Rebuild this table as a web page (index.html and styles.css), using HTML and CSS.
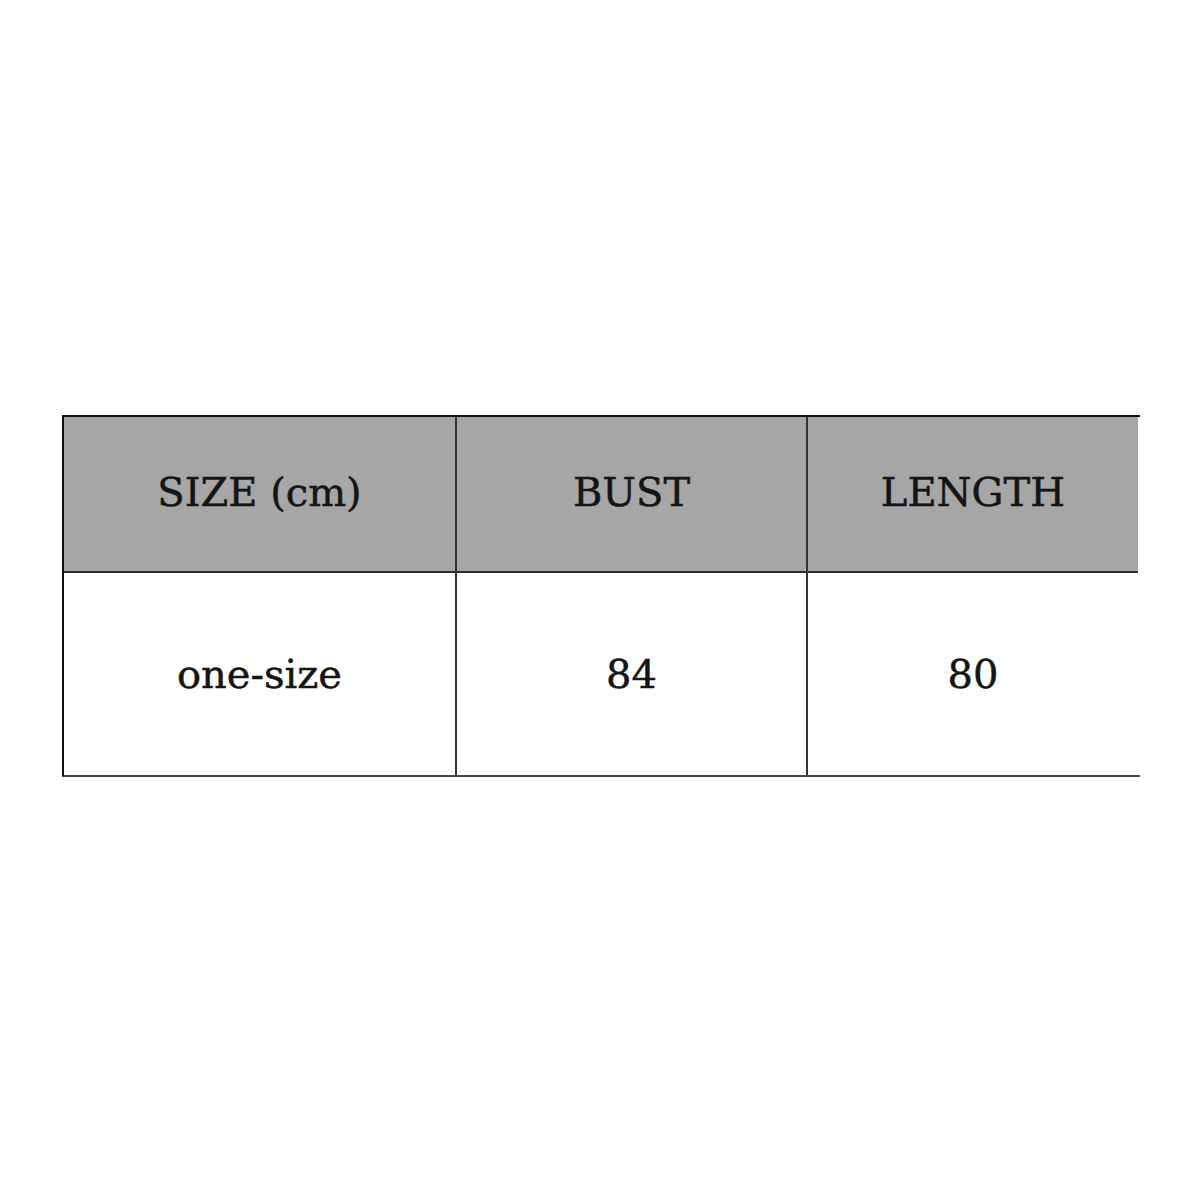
FILE: index.html
```html
<!DOCTYPE html>
<html>
<head>
<meta charset="utf-8">
<link rel="stylesheet" href="styles.css">
</head>
<body>
<div class="page">
  <div class="size-table">
    <div class="cell head">SIZE (cm)</div>
    <div class="cell head">BUST</div>
    <div class="cell head last">LENGTH</div>
    <div class="cell body">one-size</div>
    <div class="cell body">84</div>
    <div class="cell body last">80</div>
  </div>
</div>
</body>
</html>
```

FILE: styles.css
```css
html, body {
  margin: 0;
  padding: 0;
  background: #ffffff;
}
.page {
  width: 1200px;
  height: 1200px;
  padding: 415px 0 0 62px;
  box-sizing: border-box;
}
.size-table {
  width: 1076px;
  display: grid;
  grid-template-columns: 393px 351px 330px;
  grid-template-rows: 156px 202px;
  border-top: 2px solid #111111;
  border-left: 2px solid #111111;
  border-bottom: 2px solid #4a4a4a;
  font-family: "DejaVu Serif", "Liberation Serif", serif;
  font-size: 40px;
  color: #151515;
  -webkit-text-stroke: 0.5px #151515;
}
.cell {
  box-sizing: border-box;
  display: flex;
  align-items: center;
  justify-content: center;
  border-right: 2px solid #333333;
}
.cell.last {
  border-right: none;
}
.head {
  background: #a6a6a6;
  border-bottom: 2px solid #2e2e2e;
  padding-bottom: 4px;
}
.body {
  background: #ffffff;
  padding-top: 0;
}
```
